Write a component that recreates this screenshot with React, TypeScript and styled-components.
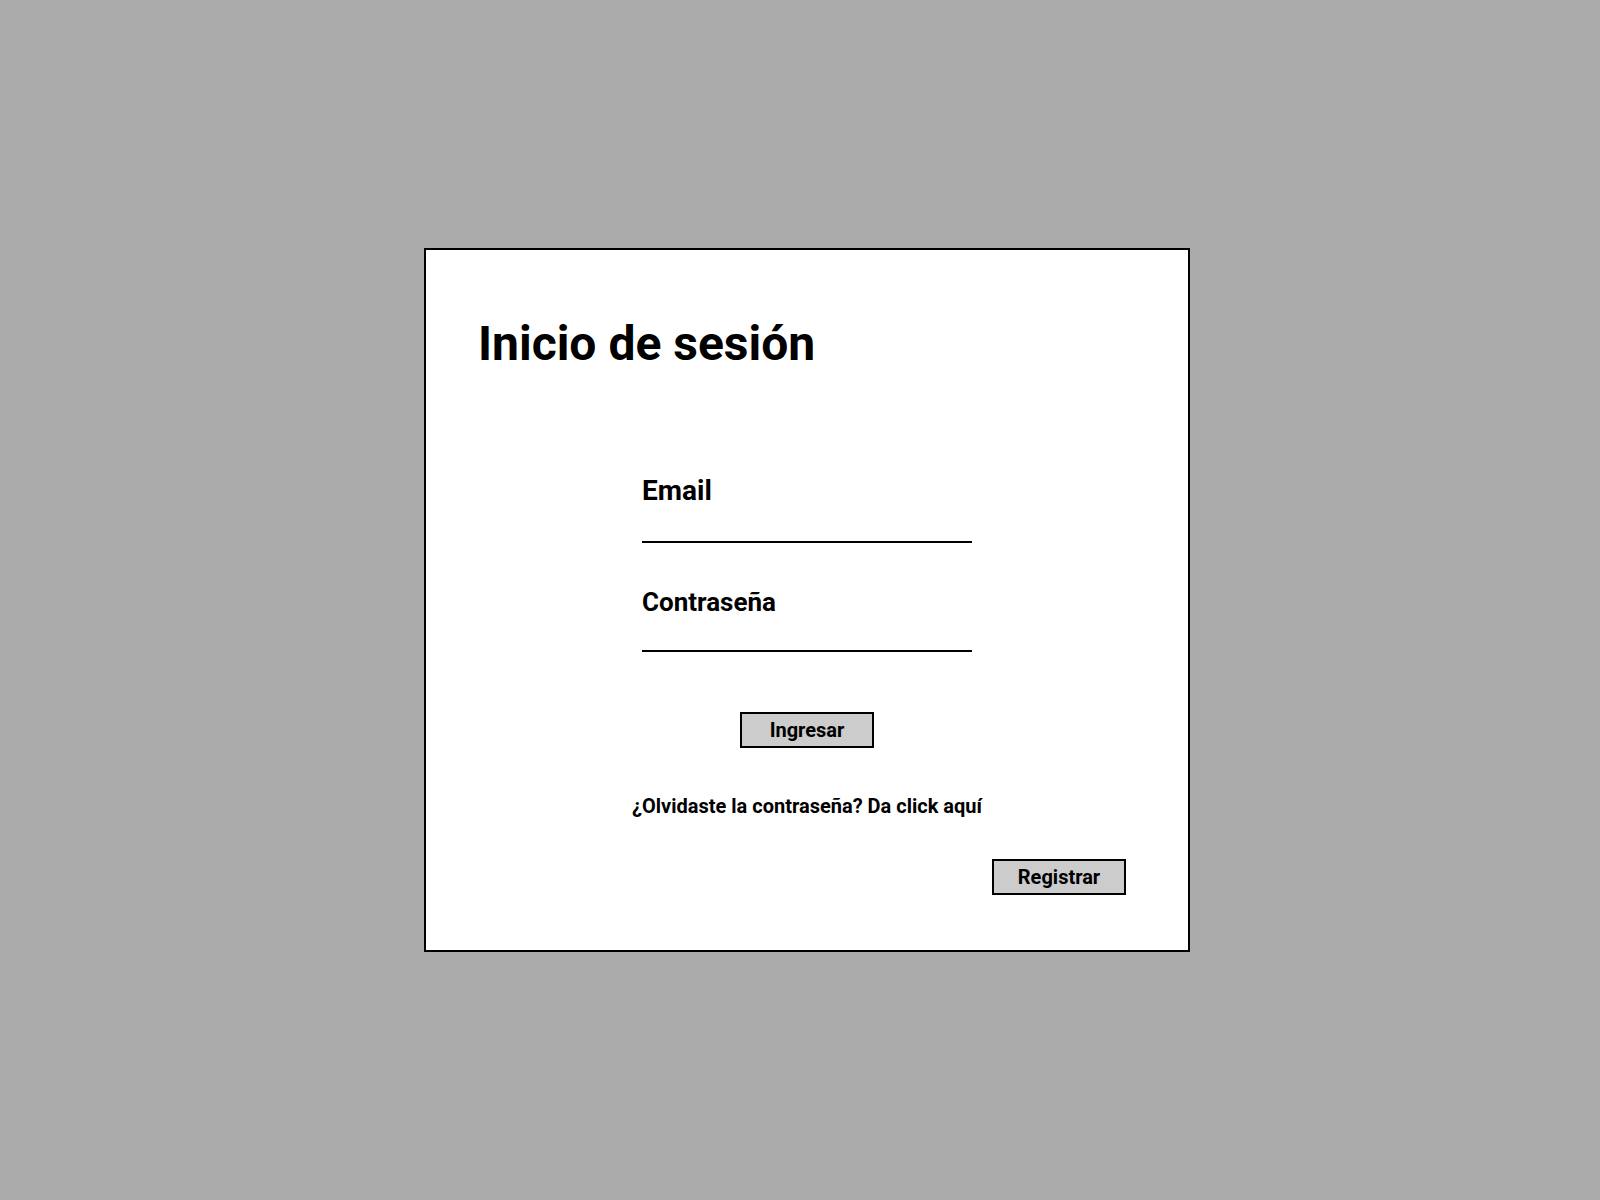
import * as React from 'react'
import styled, { createGlobalStyle } from 'styled-components'

const GlobalStyle = createGlobalStyle`
  html, body {
    margin: 0;
    padding: 0;
    background: #ababab;
    font-family: Roboto, 'Liberation Sans', sans-serif;
    color: #000;
  }
  * {
    box-sizing: border-box;
  }
`

const Page = styled.main`
  min-height: 100vh;
  display: flex;
  align-items: center;
  justify-content: center;
  padding-left: 14px;
`

const Card = styled.section`
  width: 766px;
  background: #fff;
  border: 2px solid #000;
  padding: 65px 0 55px;
  display: flex;
  flex-direction: column;
`

const Title = styled.h1`
  margin: 0;
  padding-left: 52px;
  font-size: 48px;
  font-weight: 700;
  line-height: normal;
`

const Form = styled.form`
  width: 330px;
  margin: 102px auto 0;
  display: flex;
  flex-direction: column;
`

const Label = styled.label<{ $size: number; $lh: number; $gap?: number }>`
  display: block;
  margin-top: ${(p) => p.$gap ?? 0}px;
  font-size: ${(p) => p.$size}px;
  font-weight: 700;
  line-height: ${(p) => p.$lh}px;
`

const Input = styled.input`
  display: block;
  width: 100%;
  height: 36px;
  border: none;
  border-bottom: 2px solid #000;
  background: transparent;
  outline: none;
  font: inherit;
  font-size: 18px;
  font-weight: 400;
  padding: 0;
`

const Button = styled.button<{ $gap?: number }>`
  align-self: center;
  width: 134px;
  height: 36px;
  margin-top: ${(p) => p.$gap ?? 0}px;
  background: #cccccc;
  border: 2px solid #000;
  border-radius: 0;
  font-family: Roboto, 'Liberation Sans', sans-serif;
  font-size: 20px;
  font-weight: 700;
  color: #000;
  padding: 0;
  cursor: pointer;
`

const Forgot = styled.p`
  margin: 46px 0 0;
  text-align: center;
  font-size: 20px;
  font-weight: 700;
  line-height: normal;
`

const Footer = styled.div`
  display: flex;
  justify-content: flex-end;
  margin-top: 41px;
  padding-right: 62px;
`

export default function App() {
  return (
    <>
      <GlobalStyle />
      <Page>
        <Card>
          <Title>Inicio de sesión</Title>
          <Form onSubmit={(e) => e.preventDefault()}>
            <Label $size={28} $lh={33} htmlFor="email">Email</Label>
            <Input id="email" type="email" />
            <Label $size={26} $lh={28} $gap={45} htmlFor="password">Contraseña</Label>
            <Input id="password" type="password" />
            <Button type="submit" $gap={60}>Ingresar</Button>
          </Form>
          <Forgot>¿Olvidaste la contraseña? Da click aquí</Forgot>
          <Footer>
            <Button type="button">Registrar</Button>
          </Footer>
        </Card>
      </Page>
    </>
  )
}
